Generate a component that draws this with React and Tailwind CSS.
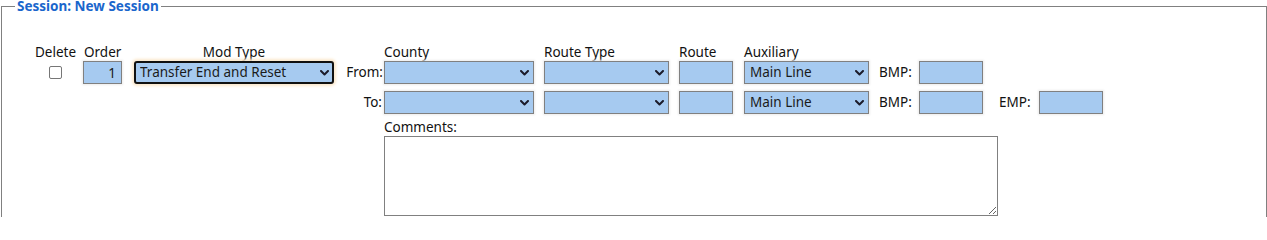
import React from "react";

const Chevron = () => (
  <svg className="pointer-events-none absolute right-[5px] top-[9px]" width="9" height="6" viewBox="0 0 9 6">
    <path d="M1 1 L4.5 4.5 L8 1" fill="none" stroke="#1b1b2a" strokeWidth="2" strokeLinecap="round" strokeLinejoin="round" />
  </svg>
);

const Select = ({ w, value, focused }) => (
  <div className={`relative h-[23px] ${w}`}>
    <select
      defaultValue={value || ""}
      className={
        focused
          ? "appearance-none w-full h-full bg-[#a6caf0] border-2 border-[#111111] rounded-[3px] pl-[4px] text-[13.5px] leading-[19px] text-[#1a1a1a] shadow-[0_0_3px_2px_#fbe8cc] outline-none"
          : "appearance-none w-full h-full bg-[#a6caf0] border border-[#808080] pl-[5px] text-[13.5px] leading-[21px] text-[#1a1a1a] shadow-[0_0_2px_1px_#ececec] outline-none"
      }
    >
      <option value="">{""}</option>
      {value ? <option value={value}>{value}</option> : null}
    </select>
    <Chevron />
  </div>
);

const Input = ({ w, value }) => (
  <input
    type="text"
    defaultValue={value || ""}
    className={`h-[23px] ${w} bg-[#a6caf0] border border-[#808080] px-[5px] text-right text-[13.5px] text-[#1a1a1a] shadow-[0_0_2px_1px_#ececec] outline-none`}
  />
);

export default function App() {
  return (
    <div className="h-[217px] overflow-hidden bg-white pl-[1px] text-[13.5px] text-[#111111]" style={{ fontFamily: '"Noto Sans", "Open Sans", sans-serif' }}>
      <fieldset className="border border-[#808080] pl-[26px] pb-[20px]">
        <legend className="-ml-[13px] px-[2px] text-[13.5px] leading-[13px] font-bold text-[#1a66cc]">Session: New Session</legend>
        <div className="mt-[30px] grid grid-cols-[55px_51px_210px_40px_160px_135px_65px_135px_40px_80px_40px_64px] grid-rows-[18px_30px_28px_17px_auto] items-start">
          {/* header row */}
          <div className="text-center leading-[18px]">Delete</div>
          <div className="leading-[18px] pl-[1px]">Order</div>
          <div className="w-[200px] text-center leading-[18px]">Mod Type</div>
          <div />
          <div className="leading-[18px]">County</div>
          <div className="leading-[18px]">Route Type</div>
          <div className="leading-[18px]">Route</div>
          <div className="leading-[18px]">Auxiliary</div>
          <div />
          <div />
          <div />
          <div />

          {/* from row */}
          <div className="flex justify-center pt-[5px]">
            <input type="checkbox" className="appearance-none w-[13px] h-[13px] border border-[#767676] rounded-[2px] bg-white" />
          </div>
          <Input w="w-[39px]" value="1" />
          <Select w="w-[200px]" value="Transfer End and Reset" focused />
          <div className="text-right leading-[23px] pr-[1px]">From:</div>
          <Select w="w-[150px]" />
          <Select w="w-[125px]" />
          <Input w="w-[54px]" />
          <Select w="w-[125px]" value="Main Line" />
          <div className="leading-[23px]">BMP:</div>
          <Input w="w-[64px]" />
          <div />
          <div />

          {/* to row */}
          <div />
          <div />
          <div />
          <div className="text-right leading-[23px] pr-[2px]">To:</div>
          <Select w="w-[150px]" />
          <Select w="w-[125px]" />
          <Input w="w-[54px]" />
          <Select w="w-[125px]" value="Main Line" />
          <div className="leading-[23px]">BMP:</div>
          <Input w="w-[64px]" />
          <div className="leading-[23px]">EMP:</div>
          <Input w="w-[64px]" />

          {/* comments */}
          <div className="col-start-5 col-span-8 leading-[17px]">Comments:</div>
          <div className="col-start-5 col-span-8">
            <textarea className="block w-[614px] h-[80px] border border-[#808080] bg-white outline-none" />
          </div>
        </div>
      </fieldset>
    </div>
  );
}
